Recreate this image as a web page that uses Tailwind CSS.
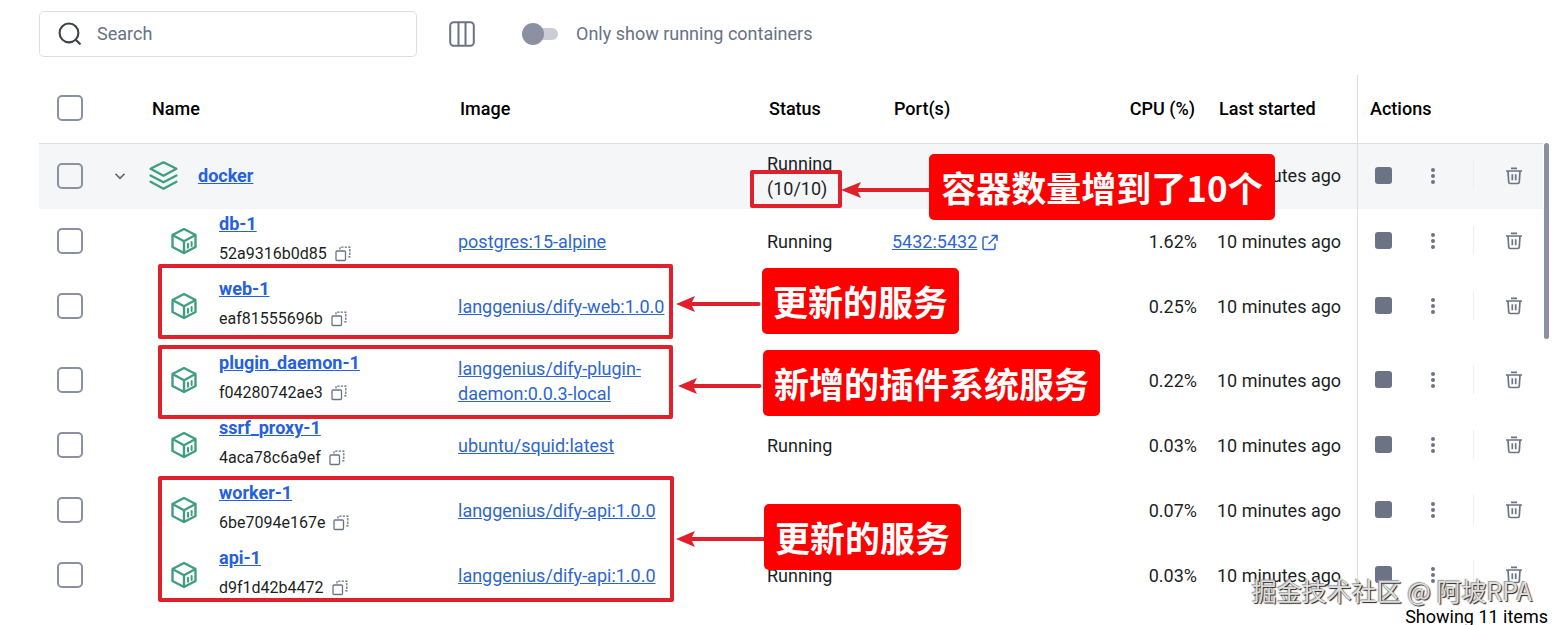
<!DOCTYPE html>
<html lang="en">
<head>
<meta charset="utf-8">
<meta name="viewport" content="width=device-width, initial-scale=1">
<title>Containers</title>
<script src="https://cdn.jsdelivr.net/npm/@tailwindcss/browser@4"></script>
</head>
<body class="bg-white font-['Roboto','Noto_Sans_CJK_SC',sans-serif] text-lg leading-[25px] text-[#1c1f24]">

<svg class="hidden" aria-hidden="true">
  <symbol id="box" viewBox="0 0 28 28">
    <g fill="none" stroke="currentColor" stroke-width="2.4" stroke-linejoin="round" stroke-linecap="round">
      <path d="M14 2 25.500 8v12L14 26 2.500 20V8zM2.500 8 14 14.200 25.500 8M14 14.200V26"/>
      <path d="M18 16.800v4M21.600 15v4" stroke-width="2"/>
    </g>
  </symbol>
  <symbol id="stack" viewBox="0 0 28 28">
    <g fill="none" stroke="currentColor" stroke-width="2.200" stroke-linejoin="round" stroke-linecap="round">
      <path d="M14 1.300 26.500 7.500 14 14.300 1.500 7.500z"/>
      <path d="M1.500 14 14 20.600 26.500 14M1.500 20 14 26.800 26.500 20"/>
    </g>
  </symbol>
  <symbol id="copy" viewBox="0 0 16 16">
    <g fill="none" stroke="currentColor" stroke-width="1.300">
      <rect x="1" y="5" width="9.500" height="9.500" rx="1"/>
      <path d="M5 3.500V1.200h9.800v9.600H12" stroke-dasharray="2.300 1.200"/>
    </g>
  </symbol>
  <symbol id="external" viewBox="0 0 18 18">
    <path d="M7.500 4H3.500A1.500 1.500 0 0 0 2 5.500v9.500A1.500 1.500 0 0 0 3.500 16.500H12.500a1.500 1.500 0 0 0 1.500-1.500V10.500M10.500 2.500H16v5.500M16 2.500 7.500 11" fill="none" stroke="currentColor" stroke-width="1.500"/>
  </symbol>
  <symbol id="trash" viewBox="0 0 18 18">
    <g fill="none" stroke="currentColor" stroke-width="1.700">
      <path d="M1 4h16M6 1.300h6M3 4l.7 11a1.600 1.600 0 0 0 1.600 1.500h7.400a1.600 1.600 0 0 0 1.600-1.500L15 4M7.300 7.200v6M10.700 7.200v6"/>
    </g>
  </symbol>
</svg>

<div class="relative flex h-screen flex-col overflow-hidden pl-[39px] pt-[11px]">
  <div class="flex shrink-0 items-center">
    <label class="flex h-[46px] w-[378px] items-center gap-4 rounded-[5px] border border-[#dcdee2] px-[18px] pb-0.5">
      <svg class="size-[23px] shrink-0 text-[#3d4148]" viewBox="0 0 22 22" fill="none" stroke="currentColor" stroke-width="2"><circle cx="10.500" cy="10.500" r="9"/><path d="m17 17 4.500 4.500"/></svg>
      <input type="text" placeholder="Search" aria-label="Search" class="min-w-0 flex-1 outline-none placeholder:text-[#677285]">
    </label>
    <button type="button" aria-label="Choose columns" class="ml-8 text-[#6b7385]">
      <svg class="size-[26px]" viewBox="0 0 26 26" fill="none" stroke="currentColor" stroke-width="2"><rect x="1.200" y="1.200" width="23.600" height="23.600" rx="3.500"/><path d="M9.500 1v24M16.500 1v24"/></svg>
    </button>
    <label class="ml-[47px] flex items-center gap-[18px] pb-px text-[#677285]">
      <input type="checkbox" role="switch" class="relative ml-2 h-3 w-7 appearance-none rounded-full bg-[#cbccd6] before:absolute before:-left-2 before:-top-[5px] before:size-[22px] before:rounded-full before:bg-[#8b91a3]">
      Only show running containers
    </label>
  </div>

  <div class="relative mt-[18px] min-h-0 flex-1 overflow-hidden pr-[9px]">
    <table class="w-full table-fixed border-separate border-spacing-0">
      <colgroup>
        <col class="w-[62px]"><col class="w-[38px]"><col><col>
        <col class="w-[125px]"><col class="w-[195px]"><col class="w-[130px]"><col class="w-[150px]"><col class="w-[186px]">
      </colgroup>
      <thead>
        <tr class="h-[69px] text-left text-black *:border-b *:border-[#dcdee2] *:px-3 *:pb-0.5 *:font-medium">
          <th class="pl-[18px]!"><input type="checkbox" aria-label="Select all" class="block size-[26px] appearance-none rounded-[5px] border-2 border-[#8b91a3]"></th>
          <th></th>
          <th class="pl-[13px]!">Name</th>
          <th>Image</th>
          <th>Status</th>
          <th>Port(s)</th>
          <th class="text-right">CPU (%)</th>
          <th>Last started</th>
          <th class="border-l">Actions</th>
        </tr>
      </thead>
      <tbody id="rows"></tbody>
    </table>
    <div class="absolute right-[3px] top-[68px] h-[196px] w-[5px] rounded-full bg-[#8b91a3]"></div>
  </div>

  <div class="h-5 shrink-0 pr-1 text-right leading-6 text-black">Showing 11 items</div>

  <!-- Callouts lying over the table -->
  <div class="pointer-events-none absolute inset-0">
    <div class="absolute left-[750px] top-[170px] h-[38px] w-[92px] rounded-[2px] border-4 border-[#e0202a]"></div>
    <div class="absolute left-[158px] top-[264px] h-[75px] w-[515px] rounded-[2px] border-4 border-[#e0202a]"></div>
    <div class="absolute left-[158px] top-[345px] h-[74px] w-[515px] rounded-[2px] border-4 border-[#e0202a]"></div>
    <div class="absolute left-[158px] top-[476px] h-[126px] w-[516px] rounded-[2px] border-4 border-[#e0202a]"></div>
    <svg class="absolute inset-0 size-full" fill="#e0202a" stroke="#e0202a" stroke-width="4" stroke-linecap="round">
      <path d="M855 190H930M690 304H758.500M692 386H759.500M690 539H764"/>
      <g stroke="none">
        <path d="m841 190 20-8-4 8 4 8z"/>
        <path d="m676 304 19-8-4 8 4 8z"/>
        <path d="m678 386 19-8-4 8 4 8z"/>
        <path d="m676 539 19-8-4 8 4 8z"/>
      </g>
    </svg>
    <div class="absolute left-[929px] top-[154px] flex h-[66px] w-[346px] items-center justify-center rounded-[5px] bg-[#fe0000] pb-0.5 font-['Noto_Sans_CJK_SC',sans-serif] text-[35px] font-bold whitespace-nowrap text-white" lang="zh">容器数量增到了10个</div>
    <div class="absolute left-[762px] top-[268px] flex h-[66px] items-center rounded-[5px] bg-[#fe0000] px-[11px] pb-0.5 font-['Noto_Sans_CJK_SC',sans-serif] text-[35px] font-bold whitespace-nowrap text-white" lang="zh">更新的服务</div>
    <div class="absolute left-[763px] top-[350px] flex h-[66px] items-center rounded-[5px] bg-[#fe0000] px-[11px] pb-0.5 font-['Noto_Sans_CJK_SC',sans-serif] text-[35px] font-bold whitespace-nowrap text-white" lang="zh">新增的插件系统服务</div>
    <div class="absolute left-[764px] top-[504px] flex h-[66px] items-center rounded-[5px] bg-[#fe0000] px-[11px] pb-0.5 font-['Noto_Sans_CJK_SC',sans-serif] text-[35px] font-bold whitespace-nowrap text-white" lang="zh">更新的服务</div>
    <div class="absolute right-5 top-[578px] font-['Noto_Sans_CJK_SC',sans-serif] text-[25px] whitespace-nowrap text-[#dedede] [text-shadow:1px_1px_1px_#222,-1px_-1px_1px_#999]" lang="zh">掘金技术社区 @ 阿坡RPA</div>
  </div>
</div>

<script>
const containers = [
  { name: 'docker', group: true, status: 'Running (10/10)', cpu: '' },
  { name: 'db-1', id: '52a9316b0d85', image: 'postgres:15-alpine', status: 'Running', port: '5432:5432', cpu: '1.62%' },
  { name: 'web-1', id: 'eaf81555696b', image: 'langgenius/dify-web:1.0.0', status: 'Running', cpu: '0.25%' },
  { name: 'plugin_daemon-1', id: 'f04280742ae3', image: 'langgenius/dify-plugin-daemon:0.0.3-local', status: 'Running', cpu: '0.22%', tall: true },
  { name: 'ssrf_proxy-1', id: '4aca78c6a9ef', image: 'ubuntu/squid:latest', status: 'Running', cpu: '0.03%' },
  { name: 'worker-1', id: '6be7094e167e', image: 'langgenius/dify-api:1.0.0', status: 'Running', cpu: '0.07%' },
  { name: 'api-1', id: 'd9f1d42b4472', image: 'langgenius/dify-api:1.0.0', status: 'Running', cpu: '0.03%' },
];

const nameCell = c => c.group
  ? `<div class="flex items-center gap-5">
       <svg class="size-[29px] shrink-0 text-[#3f9e80]"><use href="#stack"/></svg>
       <a href="#" class="font-bold text-[#2560e0] underline">${c.name}</a>
     </div>`
  : `<div class="flex items-center gap-[21px] pl-[21px]">
       <svg class="size-7 shrink-0 text-[#3f9e80]"><use href="#box"/></svg>
       <div class="h-[61px]">
         <a href="#" class="block w-fit leading-7 font-bold text-[#2560e0] underline">${c.name}</a>
         <div class="flex h-8 items-center gap-2 text-base">${c.id}
           <button type="button" aria-label="Copy ID" class="text-[#6b7385]"><svg class="size-4"><use href="#copy"/></svg></button>
         </div>
       </div>
     </div>`;

document.getElementById('rows').innerHTML = containers.map(c => `
  <tr class="${c.group ? 'h-[65px] bg-[#f4f6f8] *:px-2.5 *:pb-0.5' : c.tall ? 'h-[74px] *:px-2.5 *:pt-[9px]' : 'h-[65px] *:px-2.5'}">
    <td class="pb-0.5 pl-[18px]!"><input type="checkbox" aria-label="Select ${c.name}" class="block size-[26px] appearance-none rounded-[5px] border-2 border-[#8b91a3]"></td>
    <td class="px-0!">${c.group ? '<button type="button" aria-label="Collapse" class="ml-3 block text-[#5c6270]"><svg class="size-3.5" viewBox="0 0 14 14" fill="none" stroke="currentColor" stroke-width="1.600"><path d="m2.500 4.800 4.500 4.500 4.500-4.500"/></svg></button>' : ''}</td>
    <td class="pb-0.5">${nameCell(c)}</td>
    <td>${c.image ? `<a href="#" class="text-[#2e66d0] underline">${c.image}</a>` : ''}</td>
    <td>${c.status}</td>
    <td>${c.port ? `<a href="#" class="flex items-center gap-1 text-[#2e66d0]"><span class="underline">${c.port}</span><svg class="size-[18px]"><use href="#external"/></svg></a>` : ''}</td>
    <td class="text-right">${c.cpu}</td>
    <td class="whitespace-nowrap">10 minutes ago</td>
    <td class="border-l border-[#dcdee2] pb-0.5">
      <div class="flex items-center pl-[7px] text-[#6b7385]">
        <button type="button" aria-label="Stop" class="size-[17px] rounded-[3px] bg-[#6b7385]"></button>
        <button type="button" aria-label="More" class="ml-8 flex w-[18px] justify-center"><svg class="h-[18px] w-1.5" viewBox="0 0 6 18" fill="currentColor"><circle cx="3" cy="3" r="2"/><circle cx="3" cy="9" r="2"/><circle cx="3" cy="15" r="2"/></svg></button>
        <span class="ml-[31px] h-[29px] w-px bg-[#eceef1]"></span>
        <button type="button" aria-label="Delete" class="ml-[31px]"><svg class="size-[18px]"><use href="#trash"/></svg></button>
      </div>
    </td>
  </tr>`).join('');
</script>
</body>
</html>
